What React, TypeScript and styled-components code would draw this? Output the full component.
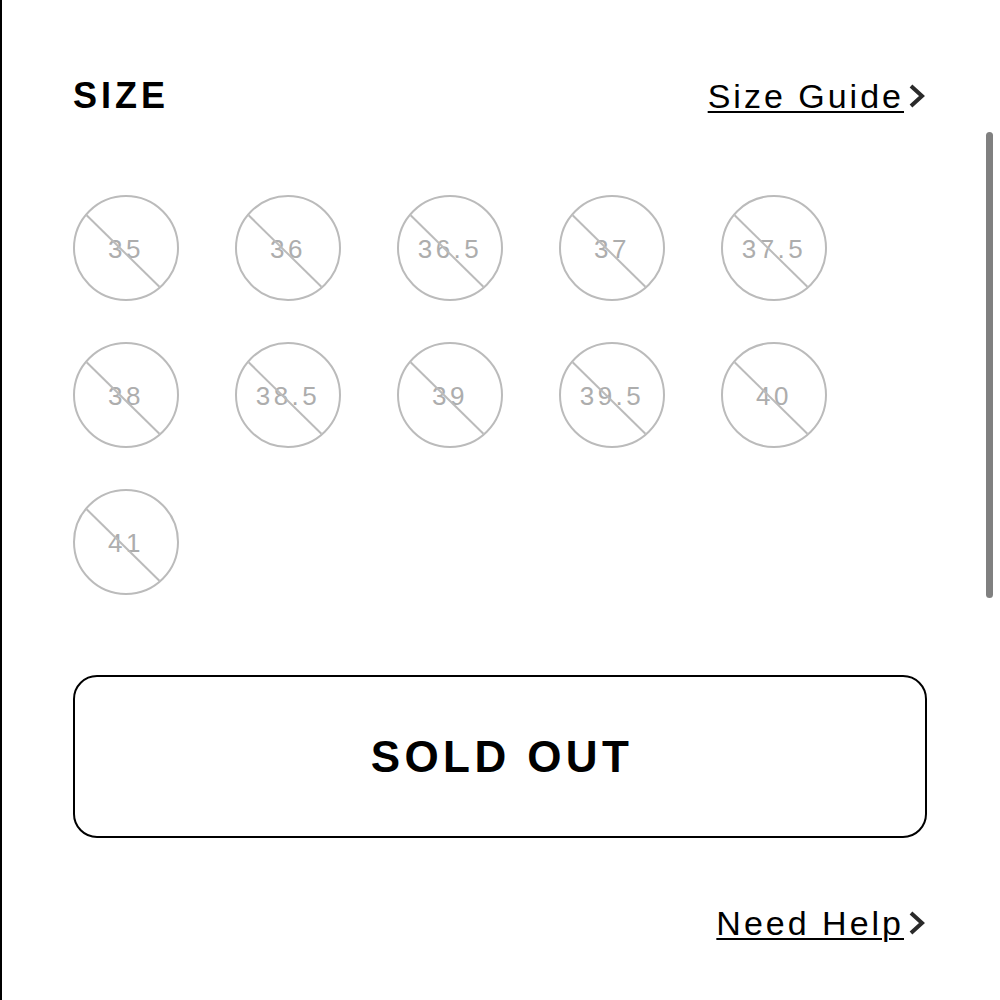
import React from "react";
import styled, { createGlobalStyle } from "styled-components";

const Global = createGlobalStyle`
  html, body { margin: 0; padding: 0; background: #fff; }
  body { font-family: "Liberation Sans", Arial, sans-serif; color: #000; }
`;

const Page = styled.div`
  position: relative;
  box-sizing: border-box;
  width: 1000px;
  height: 1000px;
  border-left: 2px solid #000;
  padding: 78px 73px 0 71px;
  display: flex;
  flex-direction: column;
  overflow: hidden;
`;

const Header = styled.div`
  display: flex;
  justify-content: space-between;
  align-items: baseline;
`;

const Title = styled.h2`
  margin: 0;
  font-size: 36px;
  line-height: 36px;
  font-weight: 700;
  letter-spacing: 4px;
`;

const LinkRow = styled.a`
  display: flex;
  align-items: center;
  gap: 3px;
  color: #000;
  text-decoration: none;
`;

const LinkText = styled.span`
  font-size: 34px;
  line-height: 34px;
  letter-spacing: 3px;
  text-decoration: underline;
  text-decoration-thickness: 2px;
  text-underline-offset: 3px;
`;

const SizeGrid = styled.div`
  margin-top: 81px;
  display: grid;
  grid-template-columns: repeat(5, 106px);
  column-gap: 56px;
  row-gap: 41px;
`;

const SizeCircle = styled.div`
  position: relative;
  box-sizing: border-box;
  width: 106px;
  height: 106px;
  border-radius: 50%;
  border: 2.5px solid #bbbbbb;
  display: flex;
  align-items: center;
  justify-content: center;
  color: #adadad;
  font-size: 26px;
  letter-spacing: 3.5px;
  padding-top: 2px;
  &::after {
    content: "";
    position: absolute;
    left: 50%;
    top: 50%;
    width: 102px;
    height: 2px;
    background: #bbbbbb;
    transform: translate(calc(-50% - 3px), calc(-50% + 3px)) rotate(44.5deg);
  }
`;

const SoldOut = styled.button`
  margin-top: 80px;
  box-sizing: border-box;
  width: 100%;
  height: 163px;
  border: 2px solid #000;
  border-radius: 24px;
  background: #fff;
  font-family: "Liberation Sans", Arial, sans-serif;
  font-weight: 700;
  font-size: 44px;
  letter-spacing: 4.4px;
  color: #000;
  padding: 0 0 0 4px;
`;

const Footer = styled.div`
  margin-top: 68px;
  display: flex;
  justify-content: flex-end;
`;

const ScrollThumb = styled.div`
  position: absolute;
  left: 984px;
  top: 132px;
  width: 7px;
  height: 466px;
  border-radius: 4px;
  background: #808080;
`;

const Chevron = () => (
  <svg width="20" height="24" viewBox="0 0 20 24">
    <polyline
      points="4,2 15,12 4,22"
      fill="none"
      stroke="#2a2a2a"
      strokeWidth="4"
      strokeLinejoin="miter"
    />
  </svg>
);

const sizes = ["35", "36", "36.5", "37", "37.5", "38", "38.5", "39", "39.5", "40", "41"];

export default function App() {
  return (
    <>
      <Global />
      <Page>
        <Header>
          <Title>SIZE</Title>
          <LinkRow href="#">
            <LinkText>Size Guide</LinkText>
            <Chevron />
          </LinkRow>
        </Header>
        <SizeGrid>
          {sizes.map((s) => (
            <SizeCircle key={s}>{s}</SizeCircle>
          ))}
        </SizeGrid>
        <SoldOut>SOLD OUT</SoldOut>
        <Footer>
          <LinkRow href="#">
            <LinkText>Need Help</LinkText>
            <Chevron />
          </LinkRow>
        </Footer>
        <ScrollThumb />
      </Page>
    </>
  );
}
